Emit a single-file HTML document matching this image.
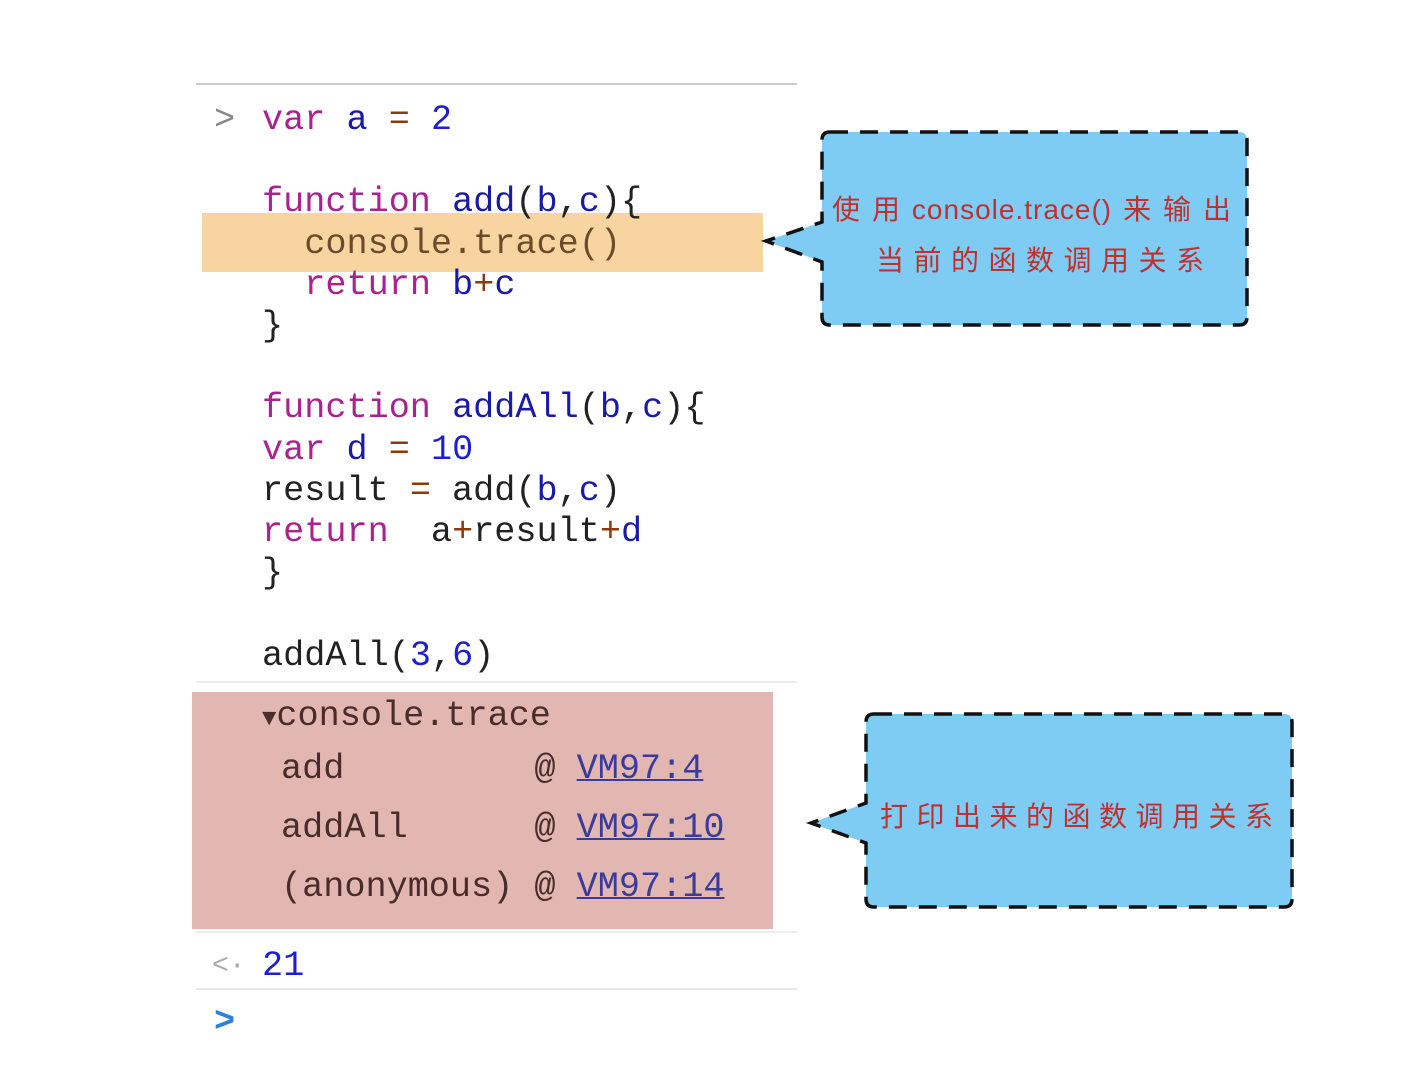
<!DOCTYPE html>
<html><head><meta charset="utf-8"><style>
body{margin:0;width:1406px;height:1084px;background:#fff;position:relative;overflow:hidden;font-family:"Liberation Mono",monospace}
.c{position:absolute;font-size:35.2px;white-space:pre;line-height:41.2px;color:#222}
.k{color:#a8238f}.v{color:#1a1aa6}.n{color:#1c1fd0}.o{color:#8b3a0f}
.hr{position:absolute;left:196px;width:601px;height:2px;background:#ddd}
.lnk{color:#3b3b9a;text-decoration:underline;text-decoration-thickness:2px}
.t{position:absolute;font-size:35.2px;white-space:pre;color:#4a2c2a;line-height:40px}
.cj{position:absolute;font-family:"Liberation Sans","WenQuanYi Zen Hei",sans-serif;color:#c0302e;font-size:28px;white-space:pre}
</style></head><body>
<div class="hr" style="top:83px;background:#ccc"></div>
<div style="position:absolute;left:202px;top:213px;width:561px;height:59px;background:#f7d4a0"></div>
<div style="position:absolute;left:192px;top:692px;width:581px;height:237px;background:#e2b7b2"></div>
<div class="hr" style="top:681px;background:#eee"></div>
<div class="hr" style="top:931px;background:#eee"></div>
<div class="hr" style="top:988px;background:#e8e8e8"></div>
<div class="c" style="left:214px;top:100px;color:#888">&gt;</div>
<div class="c" style="left:262px;top:100px"><span class="k">var</span> <span class="v">a</span> <span class="o">=</span> <span class="n">2</span>

<span class="k">function</span> <span class="v">add</span>(<span class="v">b</span>,<span class="v">c</span>){
  <span style="color:#6b4c2a">console.trace()</span>
  <span class="k">return</span> <span class="v">b</span><span class="o">+</span><span class="v">c</span>
}

<span class="k">function</span> <span class="v">addAll</span>(<span class="v">b</span>,<span class="v">c</span>){
<span class="k">var</span> <span class="v">d</span> <span class="o">=</span> <span class="n">10</span>
result <span class="o">=</span> add(<span class="v">b</span>,<span class="v">c</span>)
<span class="k">return</span>  a<span class="o">+</span>result<span class="o">+</span><span class="v">d</span>
}

addAll(<span class="n">3</span>,<span class="n">6</span>)</div>
<div class="t" style="left:262px;top:696px"><span style="font-size:24px">▼</span>console.trace</div>
<div class="t" style="left:281px;top:749px">add         @ <span class="lnk">VM97:4</span></div>
<div class="t" style="left:281px;top:808px">addAll      @ <span class="lnk">VM97:10</span></div>
<div class="t" style="left:281px;top:867px">(anonymous) @ <span class="lnk">VM97:14</span></div>
<div class="c" style="left:212px;top:946px;color:#aaa;font-size:28px">&lt;·</div>
<div class="c" style="left:262px;top:946px;color:#1c1fd0">21</div>
<div class="c" style="left:214px;top:1002px;color:#2f7fe0;font-weight:bold">&gt;</div>
<svg style="position:absolute;left:0;top:0" width="1406" height="1084">
<path d="M830 132 H1239 Q1247 132 1247 140 V317 Q1247 325 1239 325 H830 Q822 325 822 317 V262 L766 241 L822 222 V140 Q822 132 830 132Z" fill="#7ecbf4" stroke="#111" stroke-width="3.5" stroke-dasharray="18 12"/>
<path d="M874 714 H1284 Q1292 714 1292 722 V899 Q1292 907 1284 907 H874 Q866 907 866 899 V843 L811 823 L866 803 V722 Q866 714 874 714Z" fill="#7ecbf4" stroke="#111" stroke-width="3.5" stroke-dasharray="18 12"/>
</svg>
<div class="cj" style="left:832px;top:188px;width:400px;white-space:normal;text-align:justify;text-align-last:justify;letter-spacing:1px">使用console.trace()来输出</div>
<div class="cj" style="left:876px;top:239px;letter-spacing:9.5px">当前的函数调用关系</div>
<div class="cj" style="left:880px;top:795px;letter-spacing:8.5px">打印出来的函数调用关系</div>
</body></html>
